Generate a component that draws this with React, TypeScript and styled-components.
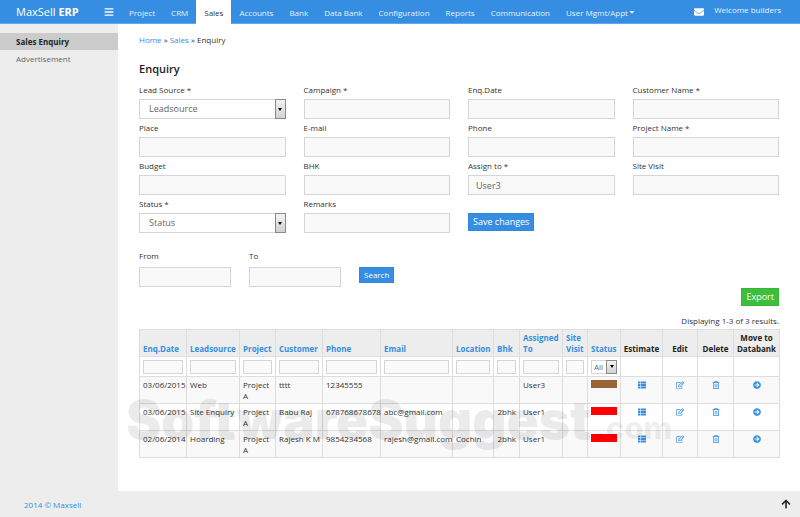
import React from "react";
import styled, { createGlobalStyle, css } from "styled-components";
import {
  FaArrowCircleRight,
  FaArrowUp,
  FaBars,
  FaCaretDown,
  FaEnvelope,
  FaRegEdit,
  FaRegTrashAlt,
  FaThList,
} from "react-icons/fa";

const blue = "#358ee2";

const GlobalStyle = createGlobalStyle`
  *, *::before, *::after { box-sizing: border-box; }
  body {
    margin: 0;
    background: #ededed;
    color: #333;
    font: 8px/11px "Open Sans", sans-serif;
  }
  input, select, button { font-family: inherit; margin: 0; border-radius: 0; }
  a { color: ${blue}; text-decoration: none; }
`;

const Page = styled.div`
  min-height: 100vh;
  display: flex;
  flex-direction: column;
`;

const TopBar = styled.header`
  display: flex;
  height: 24px;
  background: ${blue};
  border-bottom: 1px solid #5fa8ec;
  color: #fff;
`;

const Brand = styled.div`
  width: 118px;
  padding: 0 4px 0 16px;
  display: flex;
  align-items: center;
  justify-content: space-between;
  font-size: 11px;
`;

const BrandLink = styled.a`
  color: #fff;
  white-space: nowrap;
`;

const IconButton = styled.button`
  display: flex;
  padding: 0;
  border: 0;
  background: none;
  color: inherit;
  font-size: 10px;
`;

const Nav = styled.nav`
  flex: 1;
  display: flex;
  padding-left: 3px;
`;

const NavLink = styled.a<{ $active?: boolean }>`
  display: flex;
  align-items: center;
  height: 24px;
  padding: 0 8px;
  white-space: nowrap;
  color: ${(p) => (p.$active ? "#333" : "#e6f1fc")};
  background: ${(p) => (p.$active ? "#fff" : "transparent")};
`;

const Account = styled.div`
  display: flex;
  align-items: center;
  gap: 10px;
  padding-right: 19px;
`;

const Mail = styled.span`
  display: flex;
  font-size: 10px;
`;

const Welcome = styled.span`
  padding-bottom: 5px;
  color: #e6f1fc;
  white-space: nowrap;
`;

const Body = styled.div`
  display: flex;
`;

const Sidebar = styled.aside`
  width: 118px;
  padding-top: 9px;
`;

const SideLink = styled.a<{ $active?: boolean }>`
  display: block;
  padding: 0 16px;
  line-height: 17px;
  color: ${(p) => (p.$active ? "#222" : "#666")};
  font-weight: ${(p) => (p.$active ? 700 : 400)};
  background: ${(p) => (p.$active ? "#cbcbcb" : "transparent")};
`;

const Main = styled.main`
  position: relative;
  flex: 1;
  min-width: 0;
  padding: 10px 21px 33px;
  background: #fff;
`;

const Crumbs = styled.nav`
  line-height: 12px;
`;

const Title = styled.h1`
  margin: 15px 0 6px;
  font-size: 11px;
  line-height: 16px;
  font-weight: 600;
  color: #222;
`;

const FormGrid = styled.form`
  display: grid;
  grid-template-columns: repeat(4, 1fr);
  gap: 2px 18px;
`;

const FieldBox = styled.div`
  display: flex;
  flex-direction: column;
`;

const Label = styled.label`
  line-height: 14px;
  padding-bottom: 2px;
`;

const control = css`
  width: 100%;
  min-width: 0;
  border: 1px solid #d5d5d5;
  color: #666;
  font-size: 9px;
  outline: none;
`;

const TextInput = styled.input`
  ${control}
  height: 20px;
  padding: 0 7px;
  background: #f9f9f9;
`;

const SelectBox = styled.div`
  position: relative;
`;

const Select = styled.select<{ $small?: boolean }>`
  ${control}
  display: block;
  appearance: none;
  height: ${(p) => (p.$small ? 14 : 20)}px;
  padding: 0 ${(p) => (p.$small ? 2 : 9)}px;
  font-size: ${(p) => (p.$small ? 8 : 9)}px;
  line-height: ${(p) => (p.$small ? 10 : 14)}px;
  background: #fff;
`;

const SelectArrow = styled.span`
  position: absolute;
  top: 0;
  right: 0;
  bottom: 0;
  width: 11px;
  display: flex;
  align-items: center;
  justify-content: center;
  border: 1px solid #8a8a8a;
  background: linear-gradient(#f3f3f3, #d2d2d2);
  pointer-events: none;

  &::after {
    content: "";
    border: 2px solid transparent;
    border-top: 3px solid #000;
    border-bottom: 0;
  }
`;

const Button = styled.button<{ $green?: boolean; $small?: boolean }>`
  height: ${(p) => (p.$small ? 16 : 18)}px;
  padding: 0 4px;
  border: 1px solid ${(p) => (p.$green ? "#35b535" : "#2f86da")};
  background: ${(p) => (p.$green ? "#3dbe3d" : blue)};
  color: #fff;
  font-size: ${(p) => (p.$small ? 8 : 9)}px;
  line-height: 12px;
  white-space: nowrap;
`;

const SubmitCell = styled.div`
  padding-top: 16px;
`;

const RangeForm = styled.form`
  display: grid;
  grid-template-columns: 92px 92px auto;
  column-gap: 18px;
  justify-content: start;
  align-items: end;
  margin-top: 16px;
`;

const RangeLabel = styled(Label)`
  padding-bottom: 4px;
`;

const SearchCell = styled.div`
  height: 20px;
`;

const ExportRow = styled.div`
  display: flex;
  justify-content: flex-end;
  margin-top: 1px;
`;

const Summary = styled.div`
  margin: 9px 0 3px;
  text-align: right;
`;

const Table = styled.table`
  width: 100%;
  table-layout: fixed;
  border-collapse: collapse;
  border: 1px solid #ddd;
`;

const Col = styled.col<{ $w: number }>`
  width: ${(p) => p.$w}px;
`;

const Th = styled.th`
  height: 27px;
  padding: 2px 3px;
  border: 1px solid #ddd;
  background: #ededed;
  vertical-align: bottom;
  text-align: left;
  font-weight: 700;
  color: #222;
`;

const ThCenter = styled(Th)`
  padding: 2px 1px;
  text-align: center;
`;

const FilterCell = styled.td`
  height: 20px;
  padding: 2px 3px;
  border: 1px solid #ddd;
`;

const FilterInput = styled.input`
  ${control}
  display: block;
  height: 14px;
  padding: 0 2px;
  font-size: 8px;
  background: #fafafa;
`;

const Row = styled.tr`
  background: #fff;
  &:nth-child(even) {
    background: #f9f9f9;
  }
`;

const Td = styled.td<{ $align?: string }>`
  height: 27px;
  padding: 2px 0 2px 3px;
  border: 1px solid #ddd;
  vertical-align: top;
  text-align: ${(p) => p.$align || "left"};
`;

const InsetTd = styled(Td)`
  padding-right: 3px;
`;

const ActionTd = styled(Td)`
  padding: 2px 0;
`;

const StatusBar = styled.div<{ $color: string }>`
  height: 8px;
  margin-top: 1px;
  background: ${(p) => p.$color};
`;

const Action = styled(IconButton)`
  margin: 2px auto 0;
  color: ${blue};
  font-size: 8px;
`;

const Watermark = styled.div`
  position: absolute;
  left: 8px;
  bottom: 31px;
  font: 900 53px/64px Inter, sans-serif;
  color: rgba(0, 0, 0, 0.08);
  white-space: nowrap;
  pointer-events: none;
`;

const WatermarkSuffix = styled.span`
  margin-left: 4px;
  font-size: 31px;
  font-weight: 800;
`;

const Footer = styled.footer`
  flex: 1;
  display: flex;
  align-items: flex-start;
  justify-content: space-between;
  padding: 8px 9px 6px 24px;
  color: #222;
`;

const nav = ["Project", "CRM", "Sales", "Accounts", "Bank", "Data Bank", "Configuration", "Reports", "Communication"];

const fields = [
  { id: "source", label: "Lead Source *", options: ["Leadsource"] },
  { id: "campaign", label: "Campaign *" },
  { id: "date", label: "Enq.Date" },
  { id: "customer", label: "Customer Name *" },
  { id: "place", label: "Place" },
  { id: "email", label: "E-mail" },
  { id: "phone", label: "Phone" },
  { id: "project", label: "Project Name *" },
  { id: "budget", label: "Budget" },
  { id: "bhk", label: "BHK" },
  { id: "assign", label: "Assign to *", value: "User3" },
  { id: "visit", label: "Site Visit" },
  { id: "status", label: "Status *", options: ["Status"] },
  { id: "remarks", label: "Remarks" },
];

const sortable = ["Enq.Date", "Leadsource", "Project", "Customer", "Phone", "Email", "Location", "Bhk", "Assigned To", "Site Visit", "Status"];
const actions = ["Estimate", "Edit", "Delete", "Move to Databank"];
const widths = [47, 53, 36, 47, 58, 72, 41, 26, 43, 25, 33, 42, 35, 36, 46];

const rows = [
  { cells: ["03/06/2015", "Web", "Project A", "tttt", "12345555", "", "", "", "User3", ""], color: "#996633" },
  { cells: ["03/06/2015", "Site Enquiry", "Project A", "Babu Raj", "678768678678", "abc@gmail.com", "", "2bhk", "User1", ""], color: "#ff0000" },
  { cells: ["02/06/2014", "Hoarding", "Project A", "Rajesh K M", "9854234568", "rajesh@gmail.com", "Cochin", "2bhk", "User1", ""], color: "#ff0000" },
];

const actionIcons = [FaThList, FaRegEdit, FaRegTrashAlt, FaArrowCircleRight];

function Field({ id, label, options, value }: { id: string; label: string; options?: string[]; value?: string }) {
  return (
    <FieldBox>
      <Label htmlFor={id}>{label}</Label>
      {options ? (
        <SelectBox>
          <Select id={id}>
            {options.map((o) => (
              <option key={o}>{o}</option>
            ))}
          </Select>
          <SelectArrow />
        </SelectBox>
      ) : (
        <TextInput id={id} defaultValue={value} />
      )}
    </FieldBox>
  );
}

export default function App() {
  return (
    <Page>
      <GlobalStyle />
      <TopBar>
        <Brand>
          <BrandLink href="#">
            MaxSell <b>ERP</b>
          </BrandLink>
          <IconButton aria-label="Toggle menu">
            <FaBars />
          </IconButton>
        </Brand>
        <Nav>
          {nav.map((n) => (
            <NavLink key={n} href="#" $active={n === "Sales"}>
              {n}
            </NavLink>
          ))}
          <NavLink href="#">
            User Mgmt/Appt
            <FaCaretDown />
          </NavLink>
        </Nav>
        <Account>
          <Mail>
            <FaEnvelope />
          </Mail>
          <Welcome>Welcome builders</Welcome>
        </Account>
      </TopBar>
      <Body>
        <Sidebar>
          <SideLink href="#" $active>
            Sales Enquiry
          </SideLink>
          <SideLink href="#">Advertisement</SideLink>
        </Sidebar>
        <Main>
          <Crumbs>
            <a href="#">Home</a> » <a href="#">Sales</a> » <span>Enquiry</span>
          </Crumbs>
          <Title>Enquiry</Title>
          <FormGrid onSubmit={(e) => e.preventDefault()}>
            {fields.map((f) => (
              <Field key={f.id} {...f} />
            ))}
            <SubmitCell>
              <Button>Save changes</Button>
            </SubmitCell>
          </FormGrid>
          <RangeForm onSubmit={(e) => e.preventDefault()}>
            <FieldBox>
              <RangeLabel htmlFor="from">From</RangeLabel>
              <TextInput id="from" />
            </FieldBox>
            <FieldBox>
              <RangeLabel htmlFor="to">To</RangeLabel>
              <TextInput id="to" />
            </FieldBox>
            <SearchCell>
              <Button $small>Search</Button>
            </SearchCell>
          </RangeForm>
          <ExportRow>
            <Button $green>Export</Button>
          </ExportRow>
          <Summary>Displaying 1-3 of 3 results.</Summary>
          <Table>
            <colgroup>
              {widths.map((w, i) => (
                <Col key={i} $w={w} />
              ))}
            </colgroup>
            <thead>
              <tr>
                {sortable.map((h) => (
                  <Th key={h}>
                    <a href="#">{h}</a>
                  </Th>
                ))}
                {actions.map((h) => (
                  <ThCenter key={h}>{h}</ThCenter>
                ))}
              </tr>
            </thead>
            <tbody>
              <Row>
                {sortable.slice(0, 10).map((h) => (
                  <FilterCell key={h}>
                    <FilterInput aria-label={`Filter by ${h}`} />
                  </FilterCell>
                ))}
                <FilterCell>
                  <SelectBox>
                    <Select $small aria-label="Filter by Status">
                      <option>All</option>
                    </Select>
                    <SelectArrow />
                  </SelectBox>
                </FilterCell>
                {actions.map((h) => (
                  <FilterCell key={h} />
                ))}
              </Row>
              {rows.map((r, i) => (
                <Row key={i}>
                  {r.cells.map((c, j) =>
                    j === 7 ? (
                      <InsetTd key={j} $align="right">
                        {c}
                      </InsetTd>
                    ) : (
                      <Td key={j}>{c}</Td>
                    )
                  )}
                  <InsetTd>
                    <StatusBar $color={r.color} />
                  </InsetTd>
                  {actionIcons.map((Icon, j) => (
                    <ActionTd key={j}>
                      <Action aria-label={actions[j]}>
                        <Icon />
                      </Action>
                    </ActionTd>
                  ))}
                </Row>
              ))}
            </tbody>
          </Table>
          <Watermark>
            SoftwareSuggest<WatermarkSuffix>.com</WatermarkSuffix>
          </Watermark>
        </Main>
      </Body>
      <Footer>
        <a href="#">2014 © Maxsell</a>
        <IconButton aria-label="Back to top">
          <FaArrowUp />
        </IconButton>
      </Footer>
    </Page>
  );
}
